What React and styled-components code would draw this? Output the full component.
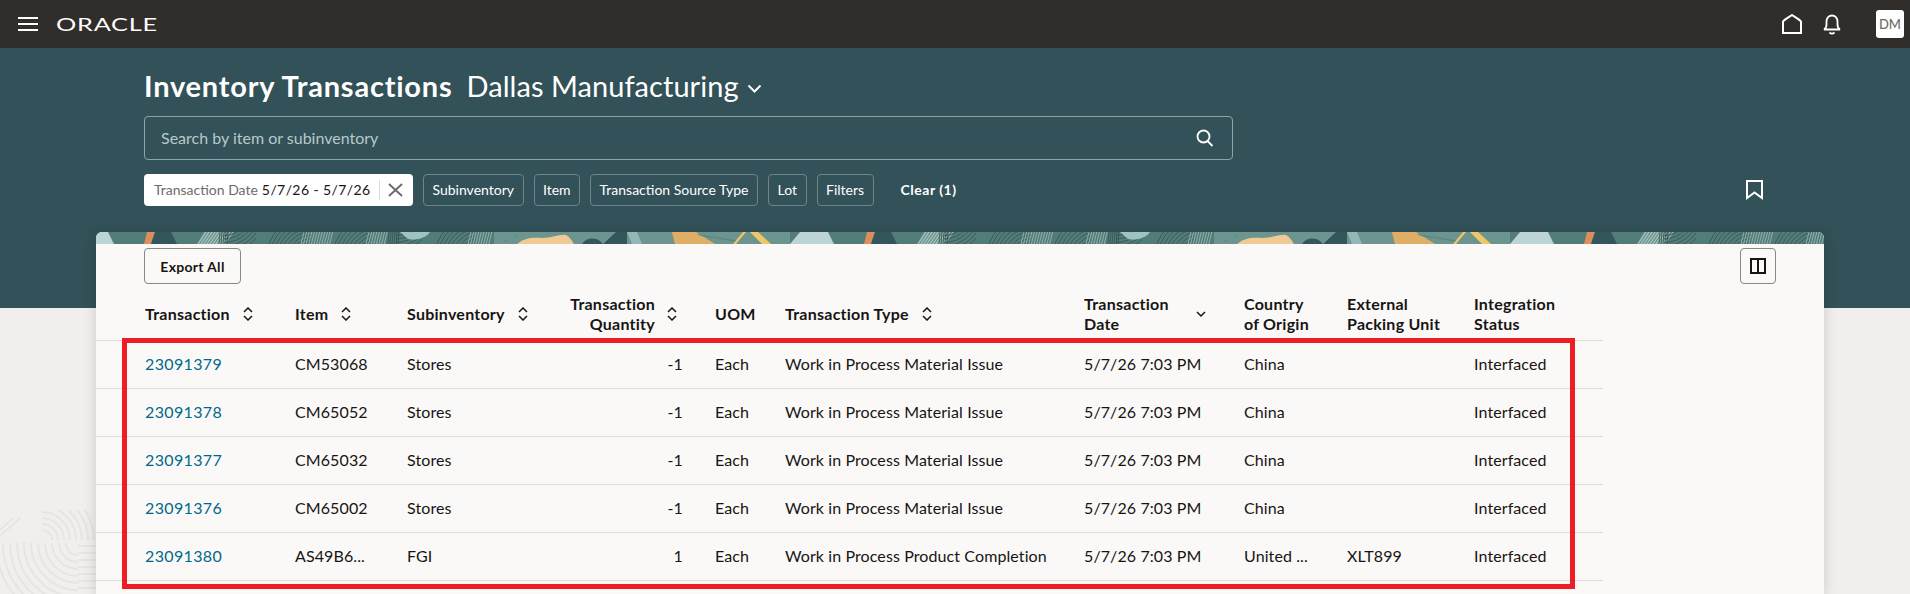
import styled, { createGlobalStyle } from "styled-components";

const GlobalStyle = createGlobalStyle`
  html, body {
    margin: 0;
    height: 100%;
    overflow: hidden;
    background: #f1efed;
    color: #161513;
    font-family: Lato, "Noto Sans", sans-serif;
  }
`;

const Page = styled.div`
  position: relative;
  height: 594px;
  overflow: hidden;
`;

const TopBar = styled.header`
  display: flex;
  align-items: center;
  height: 48px;
  padding: 0 6px 0 18px;
  background: #312d2a;
`;

const MenuButton = styled.div`
  display: flex;
  flex-direction: column;
  justify-content: space-between;
  width: 20px;
  height: 14px;
  span {
    height: 2px;
    background: #fff;
  }
`;

const Logo = styled.span`
  margin-left: 18px;
  width: 100px;
  color: #fff;
  font-size: 17px;
  line-height: 17px;
  letter-spacing: 0.5px;
  transform: scaleX(1.49);
  transform-origin: left center;
`;

const TopIcons = styled.div`
  display: flex;
  align-items: center;
  margin-left: auto;
`;

const IconSlot = styled.span`
  display: flex;
  margin-right: ${(p) => p.$right}px;
`;

const Avatar = styled.div`
  display: flex;
  align-items: center;
  justify-content: center;
  width: 28px;
  height: 28px;
  border-radius: 3px;
  background: #fff;
  color: #6f6b67;
  font-size: 13px;
  font-weight: 500;
`;

const Hero = styled.section`
  height: 240px;
  padding: 20px 147px 0 144px;
  background: #325158;
  color: #fff;
`;

const TitleRow = styled.div`
  display: flex;
  align-items: center;
  height: 36px;
`;

const Title = styled.h1`
  margin: 0;
  font-size: 29px;
  font-weight: 700;
  line-height: 36px;
  letter-spacing: 0.78px;
`;

const Site = styled.span`
  margin-left: 14px;
  font-size: 29px;
  line-height: 36px;
  letter-spacing: 0.05px;
`;

const SiteCaret = styled.span`
  display: flex;
  margin-left: 8px;
  margin-top: 4px;
`;

const SearchBox = styled.div`
  display: flex;
  align-items: center;
  justify-content: space-between;
  box-sizing: border-box;
  width: 1089px;
  height: 44px;
  margin-top: 12px;
  padding: 0 18px 0 16px;
  border: 1px solid #8fa3a7;
  border-radius: 4px;
  color: #b9c8ca;
  font-size: 16px;
`;

const Placeholder = styled.span`
  margin-top: -2px;
`;

const FilterRow = styled.div`
  display: flex;
  align-items: center;
  gap: 10px;
  margin-top: 14px;
`;

const DateChip = styled.div`
  display: flex;
  align-items: center;
  box-sizing: border-box;
  width: 269px;
  height: 32px;
  padding-left: 10px;
  border-radius: 4px;
  background: #fff;
  color: #161513;
  font-size: 14px;
`;

const ChipLabel = styled.span`
  margin: -2px 4px 0 0;
  color: #6f6b67;
`;

const ChipValue = styled.span`
  margin-top: -2px;
  letter-spacing: 0.4px;
`;

const ChipClose = styled.span`
  display: flex;
  align-items: center;
  height: 20px;
  margin-left: 8px;
  padding-left: 8px;
  border-left: 1px solid #dedbd8;
`;

const FilterButton = styled.div`
  display: flex;
  align-items: center;
  box-sizing: border-box;
  height: 32px;
  padding: 0 8.5px 2px;
  border: 1px solid #6d8489;
  border-radius: 4px;
  font-size: 14px;
`;

const ClearLink = styled.span`
  margin: -2px 0 0 17px;
  font-size: 14px;
  font-weight: 700;
  letter-spacing: 0.5px;
`;

const Bookmark = styled.span`
  display: flex;
  margin-left: auto;
`;

const Art = styled.svg`
  position: absolute;
  left: 0;
  top: 510px;
`;

const Card = styled.main`
  position: relative;
  width: 1728px;
  height: 362px;
  margin: -76px 0 0 96px;
  border-radius: 6px 6px 0 0;
  background: #fbf9f8;
  box-shadow: 0 2px 14px rgba(0, 0, 0, 0.16);
`;

const Banner = styled.svg`
  display: block;
  width: 100%;
  height: 12px;
  border-radius: 6px 6px 0 0;
`;

const Toolbar = styled.div`
  display: flex;
  justify-content: space-between;
  padding: 4px 48px;
`;

const ToolButton = styled.div`
  display: flex;
  align-items: center;
  justify-content: center;
  box-sizing: border-box;
  width: ${(p) => p.$width}px;
  height: 36px;
  border: 1px solid #8a8784;
  border-radius: 4px;
  font-size: 14px;
  font-weight: 700;
  letter-spacing: 0.3px;
`;

const Table = styled.table`
  width: 1507px;
  border-collapse: collapse;
  table-layout: fixed;
  font-size: 16px;
  letter-spacing: 0.1px;
`;

const HeadCell = styled.th`
  box-sizing: border-box;
  height: 52px;
  padding: 0 ${(p) => p.$right || 16}px 0 ${(p) => p.$left || 16}px;
  border-bottom: 1px solid #dfdddb;
  font-weight: 700;
  line-height: 20px;
  letter-spacing: 0.25px;
  text-align: left;
`;

const HeadInner = styled.div`
  display: flex;
  align-items: center;
  justify-content: ${(p) => (p.$end ? "flex-end" : "flex-start")};
  gap: ${(p) => p.$gap || 13}px;
  overflow: hidden;
  text-align: ${(p) => (p.$end ? "right" : "left")};
`;

const SortIcon = styled.svg`
  flex: none;
`;

const Cell = styled.td`
  box-sizing: border-box;
  height: 48px;
  padding: 0 16px 2px ${(p) => p.$left || 16}px;
  border-bottom: 1px solid #dfdddb;
  text-align: ${(p) => (p.$end ? "right" : "left")};
`;

const TxLink = styled.a`
  color: #00688c;
  letter-spacing: 0.35px;
`;

const Annotation = styled.div`
  position: absolute;
  left: 26px;
  top: 106px;
  box-sizing: border-box;
  width: 1453px;
  height: 251px;
  border: 5px solid #ee1c25;
  pointer-events: none;
`;

const columns = [183, 112, 162, 146, 71, 298, 160, 103, 127, 145];

const rows = [
  { id: "23091379", item: "CM53068", sub: "Stores", qty: "-1", type: "Work in Process Material Issue", country: "China", pack: "" },
  { id: "23091378", item: "CM65052", sub: "Stores", qty: "-1", type: "Work in Process Material Issue", country: "China", pack: "" },
  { id: "23091377", item: "CM65032", sub: "Stores", qty: "-1", type: "Work in Process Material Issue", country: "China", pack: "" },
  { id: "23091376", item: "CM65002", sub: "Stores", qty: "-1", type: "Work in Process Material Issue", country: "China", pack: "" },
  { id: "23091380", item: "AS49B6...", sub: "FGI", qty: "1", type: "Work in Process Product Completion", country: "United ...", pack: "XLT899" },
];

const filters = ["Subinventory", "Item", "Transaction Source Type", "Lot", "Filters"];

function SortBoth() {
  return (
    <SortIcon width="10" height="14" viewBox="0 0 10 14" fill="none" stroke="#161513" strokeWidth="1.5">
      <path d="M1 5l4-4 4 4M1 9l4 4 4-4" />
    </SortIcon>
  );
}

function SortDown() {
  return (
    <SortIcon width="10" height="14" viewBox="0 0 10 14" fill="none" stroke="#161513" strokeWidth="1.5">
      <path d="M1 5l4 4 4-4" />
    </SortIcon>
  );
}

// rings of one fingerprint, cut to the box x..x+w
function Rings({ id, x, w, cx, cy, from, to, step, color }) {
  const radii = [];
  for (let r = from; r <= to; r += step) radii.push(r);
  return (
    <g>
      <clipPath id={id}>
        <rect x={x} y="0" width={w} height="12" />
      </clipPath>
      <g clipPath={`url(#${id})`} fill="none" stroke={color} strokeWidth="0.7">
        {radii.map((r) => (
          <circle key={r} cx={cx} cy={cy} r={r} />
        ))}
      </g>
    </g>
  );
}

function Hatch({ x, count, step, lean, color }) {
  const lines = [];
  for (let i = 0; i < count; i++) lines.push(x + i * step);
  return (
    <g stroke={color} strokeWidth="0.8">
      {lines.map((l) => (
        <line key={l} x1={l + lean} y1="0" x2={l} y2="12" />
      ))}
    </g>
  );
}

function BannerArt() {
  return (
    <Banner>
      <defs>
        <pattern id="tile" patternUnits="userSpaceOnUse" width="720" height="12">
          <rect width="720" height="12" fill="#517c78" />
          <polygon points="0,0 12,0 18,12 0,12" fill="#bcd4d6" />
          <polygon points="51,0 59,0 55,12 48,12" fill="#e08e59" />
          <polygon points="59,0 75,0 81,12 55,12" fill="#34555c" />

          <polygon points="108,0 130,0 130,12 101,12" fill="#6f9a94" />
          <Hatch x={102} count={10} step={3} lean={8} color="#c9d8cf" />
          <Hatch x={123} count={5} step={2} lean={1} color="#33504f" />
          <Rings id="r1" x={128} w={32} cx={128} cy={-22} from={22} to={44} step={3.5} color="#2f4a4b" />

          <Rings id="r2" x={170} w={45} cx={216} cy={28} from={18} to={48} step={3.5} color="#2f4a4b" />
          <Hatch x={205} count={12} step={2.6} lean={3} color="#a5bdb6" />
          <Rings id="r3" x={237} w={38} cx={282} cy={28} from={18} to={48} step={3.5} color="#2f4a4b" />
          <Hatch x={270} count={8} step={2.6} lean={3} color="#a5bdb6" />
          <Hatch x={292} count={6} step={2} lean={1} color="#33504f" />
          <Rings id="r4" x={300} w={26} cx={300} cy={-22} from={22} to={44} step={3.5} color="#2f4a4b" />
          <path d="M304 0 H334 C330 6 320 9 312 7 Z" fill="#9fc3c2" />

          <Rings id="r5" x={340} w={38} cx={384} cy={28} from={18} to={48} step={3.5} color="#2f4a4b" />
          <Hatch x={372} count={9} step={2.6} lean={3} color="#a5bdb6" />

          <rect x="398" width="178" height="12" fill="#6c958f" />
          <path d="M421 12 C428 6 436 5 446 6 C456 6 464 2 470 3 C474 5 476 9 478 12 Z" fill="#efca94" />
          <path d="M486 12 C490 6 498 5 504 9 L507 12 Z" fill="#34555c" />
          <polygon points="507,12 520,0 531,0 531,12" fill="#34555c" />
          <polygon points="531,0 541,0 546,12 536,12" fill="#93b7b7" />
          <rect x="546" width="148" height="12" fill="#6c958f" />
          <polygon points="576,0 600,0 619,12 579,12" fill="#e0ad66" />
          <polygon points="600,2 640,8 640,10 605,4" fill="#5e8781" />
          <polygon points="647,0 650,0 640,12 637,12" fill="#f0c667" />
          <polygon points="654,0 662,0 675,12 666,12" fill="#f0c667" />
          <polygon points="694,12 704,0 720,0 720,12" fill="#bcd4d6" />
          <circle cx="420" cy="4" r="0.7" fill="#4d7672" />
          <circle cx="560" cy="8" r="0.7" fill="#4d7672" />
          <circle cx="410" cy="9" r="0.7" fill="#4d7672" />
        </pattern>
      </defs>
      <rect width="100%" height="12" fill="url(#tile)" />
    </Banner>
  );
}

function PageArt() {
  const small = [10, 16, 22, 28, 34, 40, 46, 52];
  const large = [12, 19, 26, 33, 40, 47, 54, 61, 68, 75, 82];
  const flat = [36, 43, 50, 57, 64, 71, 78];
  return (
    <Art width="96" height="84" viewBox="0 0 96 84" fill="none" stroke="#e7e5e3" strokeWidth="2">
      <path d="M0 26L20 8M0 20L13 8" />
      {small.map((r) => (
        <path key={r} d={`M42 ${30 - r}A${r} ${r} 0 0 1 ${42 + r} 30`} />
      ))}
      {large.map((r) => (
        <path key={r} d={`M${78 - r} 33A${r} ${r} 0 0 0 78 ${33 + r}`} />
      ))}
      {flat.map((y) => (
        <path key={y} d={`M78 ${y}H96`} />
      ))}
    </Art>
  );
}

export default function App() {
  return (
    <Page>
      <GlobalStyle />
      <TopBar>
        <MenuButton>
          <span />
          <span />
          <span />
        </MenuButton>
        <Logo>ORACLE</Logo>
        <TopIcons>
          <IconSlot $right={20}>
            <svg width="22" height="20" viewBox="0 0 22 20" fill="none" stroke="#fff" strokeWidth="2">
              <path d="M2 19V7.500C4 5 8 3 11 1c3 2 7 4 9 6.500V19z" />
            </svg>
          </IconSlot>
          <IconSlot $right={35}>
            <svg width="18" height="21" viewBox="0 0 18 21" fill="none" stroke="#fff" strokeWidth="1.8">
              <path d="M1 15.500c2-1 2.500-2.500 2.500-5V7.500C3.500 4 6 1.500 9 1.500s5.500 2.500 5.500 6v3c0 2.500.5 4 2.500 5z" />
              <path d="M6.500 18.500c1.500 1.500 3.500 1.500 5 0" />
            </svg>
          </IconSlot>
          <Avatar>DM</Avatar>
        </TopIcons>
      </TopBar>

      <Hero>
        <TitleRow>
          <Title>Inventory Transactions</Title>
          <Site>Dallas Manufacturing</Site>
          <SiteCaret>
            <svg width="15" height="9" viewBox="0 0 15 9" fill="none" stroke="#fff" strokeWidth="2">
              <path d="M1.500 1.500l6 6 6-6" />
            </svg>
          </SiteCaret>
        </TitleRow>
        <SearchBox>
          <Placeholder>Search by item or subinventory</Placeholder>
          <svg width="18" height="18" viewBox="0 0 18 18" fill="none" stroke="#fff" strokeWidth="1.8">
            <circle cx="7.500" cy="7.500" r="6" />
            <path d="M11.500 12l5 5" />
          </svg>
        </SearchBox>
        <FilterRow>
          <DateChip>
            <ChipLabel>Transaction Date</ChipLabel>
            <ChipValue>5/7/26 - 5/7/26</ChipValue>
            <ChipClose>
              <svg width="15" height="14" viewBox="0 0 15 14" fill="none" stroke="#6b6763" strokeWidth="1.8">
                <path d="M1 1l13 12M14 1L1 13" />
              </svg>
            </ChipClose>
          </DateChip>
          {filters.map((f) => (
            <FilterButton key={f}>{f}</FilterButton>
          ))}
          <ClearLink>Clear (1)</ClearLink>
          <Bookmark>
            <svg width="17" height="20" viewBox="0 0 17 20" fill="none" stroke="#fff" strokeWidth="2">
              <path d="M1 1h15v17l-7.500-5.500L1 18z" />
            </svg>
          </Bookmark>
        </FilterRow>
      </Hero>

      <PageArt />

      <Card>
        <BannerArt />
        <Toolbar>
          <ToolButton $width={97}>Export All</ToolButton>
          <ToolButton $width={36}>
            <svg width="16" height="16" viewBox="0 0 16 16" fill="none" stroke="#161513" strokeWidth="2">
              <path d="M1 1h14v14H1zM8 1v14" />
            </svg>
          </ToolButton>
        </Toolbar>
        <Table>
          <colgroup>
            {columns.map((w, i) => (
              <col key={i} width={w} />
            ))}
          </colgroup>
          <thead>
            <tr>
              <HeadCell $left={49}>
                <HeadInner>Transaction<SortBoth /></HeadInner>
              </HeadCell>
              <HeadCell>
                <HeadInner>Item<SortBoth /></HeadInner>
              </HeadCell>
              <HeadCell>
                <HeadInner>Subinventory<SortBoth /></HeadInner>
              </HeadCell>
              <HeadCell $left={8} $right={22}>
                <HeadInner $end $gap={12}>
                  <span>Transaction<br />Quantity</span>
                  <SortBoth />
                </HeadInner>
              </HeadCell>
              <HeadCell $right={6}>
                <HeadInner>UOM</HeadInner>
              </HeadCell>
              <HeadCell $left={15}>
                <HeadInner>Transaction Type<SortBoth /></HeadInner>
              </HeadCell>
              <HeadCell>
                <HeadInner $gap={27}>
                  <span>Transaction<br />Date</span>
                  <SortDown />
                </HeadInner>
              </HeadCell>
              <HeadCell>
                <HeadInner>Country<br />of Origin</HeadInner>
              </HeadCell>
              <HeadCell>
                <HeadInner>External<br />Packing Unit</HeadInner>
              </HeadCell>
              <HeadCell>
                <HeadInner>Integration<br />Status</HeadInner>
              </HeadCell>
            </tr>
          </thead>
          <tbody>
            {rows.map((r) => (
              <tr key={r.id}>
                <Cell $left={49}><TxLink>{r.id}</TxLink></Cell>
                <Cell>{r.item}</Cell>
                <Cell>{r.sub}</Cell>
                <Cell $end>{r.qty}</Cell>
                <Cell>Each</Cell>
                <Cell $left={15}>{r.type}</Cell>
                <Cell>5/7/26 7:03 PM</Cell>
                <Cell>{r.country}</Cell>
                <Cell>{r.pack}</Cell>
                <Cell>Interfaced</Cell>
              </tr>
            ))}
          </tbody>
        </Table>
        <Annotation />
      </Card>
    </Page>
  );
}
